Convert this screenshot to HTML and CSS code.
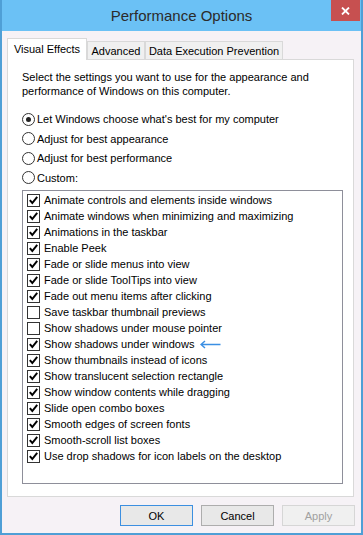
FILE: index.html
```html
<!DOCTYPE html>
<html lang="en">
<head>
    <meta charset="UTF-8">
    <meta name="viewport" content="width=device-width, initial-scale=1.0">
    <title>Performance Options</title>
    <link rel="stylesheet" href="styles.css">
</head>
<body>
    <div class="window">
        <div class="titlebar">
            <div class="title">Performance Options</div>
            <div class="close">
                <svg width="9" height="8" viewBox="0 0 9 8"><path d="M1 0.5 L8 7.5 M8 0.5 L1 7.5" stroke="#fff" stroke-width="1.8"/></svg>
            </div>
        </div>

        <div class="content">
            <div class="tabs">
                <div class="tab active tab-visual">Visual Effects</div>
                <div class="tab tab-advanced">Advanced</div>
                <div class="tab tab-dep">Data Execution Prevention</div>
            </div>

            <div class="panel">
                <p class="intro">Select the settings you want to use for the appearance and performance of Windows on this computer.</p>

                <div class="radios">
                    <div class="radio-row"><span class="radio on"></span>Let Windows choose what's best for my computer</div>
                    <div class="radio-row"><span class="radio"></span>Adjust for best appearance</div>
                    <div class="radio-row"><span class="radio"></span>Adjust for best performance</div>
                    <div class="radio-row"><span class="radio"></span>Custom:</div>
                </div>

                <div class="list">
                    <div class="item"><span class="check on"><svg viewBox="0 0 11 11"><path d="M1.8 5.2 L4.3 8 L9.2 1.8"/></svg></span>Animate controls and elements inside windows</div>
                    <div class="item"><span class="check on"><svg viewBox="0 0 11 11"><path d="M1.8 5.2 L4.3 8 L9.2 1.8"/></svg></span>Animate windows when minimizing and maximizing</div>
                    <div class="item"><span class="check on"><svg viewBox="0 0 11 11"><path d="M1.8 5.2 L4.3 8 L9.2 1.8"/></svg></span>Animations in the taskbar</div>
                    <div class="item"><span class="check on"><svg viewBox="0 0 11 11"><path d="M1.8 5.2 L4.3 8 L9.2 1.8"/></svg></span>Enable Peek</div>
                    <div class="item"><span class="check on"><svg viewBox="0 0 11 11"><path d="M1.8 5.2 L4.3 8 L9.2 1.8"/></svg></span>Fade or slide menus into view</div>
                    <div class="item"><span class="check on"><svg viewBox="0 0 11 11"><path d="M1.8 5.2 L4.3 8 L9.2 1.8"/></svg></span>Fade or slide ToolTips into view</div>
                    <div class="item"><span class="check on"><svg viewBox="0 0 11 11"><path d="M1.8 5.2 L4.3 8 L9.2 1.8"/></svg></span>Fade out menu items after clicking</div>
                    <div class="item"><span class="check"></span>Save taskbar thumbnail previews</div>
                    <div class="item"><span class="check"></span>Show shadows under mouse pointer</div>
                    <div class="item"><span class="check on"><svg viewBox="0 0 11 11"><path d="M1.8 5.2 L4.3 8 L9.2 1.8"/></svg></span>Show shadows under windows
                        <svg class="arrow" width="21" height="9" viewBox="0 0 21 9"><path d="M1 4.5 H20.5 M5 1 L1 4.5 L5 8"/></svg>
                    </div>
                    <div class="item"><span class="check on"><svg viewBox="0 0 11 11"><path d="M1.8 5.2 L4.3 8 L9.2 1.8"/></svg></span>Show thumbnails instead of icons</div>
                    <div class="item"><span class="check on"><svg viewBox="0 0 11 11"><path d="M1.8 5.2 L4.3 8 L9.2 1.8"/></svg></span>Show translucent selection rectangle</div>
                    <div class="item"><span class="check on"><svg viewBox="0 0 11 11"><path d="M1.8 5.2 L4.3 8 L9.2 1.8"/></svg></span>Show window contents while dragging</div>
                    <div class="item"><span class="check on"><svg viewBox="0 0 11 11"><path d="M1.8 5.2 L4.3 8 L9.2 1.8"/></svg></span>Slide open combo boxes</div>
                    <div class="item"><span class="check on"><svg viewBox="0 0 11 11"><path d="M1.8 5.2 L4.3 8 L9.2 1.8"/></svg></span>Smooth edges of screen fonts</div>
                    <div class="item"><span class="check on"><svg viewBox="0 0 11 11"><path d="M1.8 5.2 L4.3 8 L9.2 1.8"/></svg></span>Smooth-scroll list boxes</div>
                    <div class="item"><span class="check on"><svg viewBox="0 0 11 11"><path d="M1.8 5.2 L4.3 8 L9.2 1.8"/></svg></span>Use drop shadows for icon labels on the desktop</div>
                </div>
            </div>

            <div class="buttons">
                <button class="btn default">OK</button>
                <button class="btn">Cancel</button>
                <button class="btn disabled">Apply</button>
            </div>
        </div>
    </div>
</body>
</html>
```

FILE: styles.css
```css
* {
    margin: 0;
    padding: 0;
    box-sizing: border-box;
}

body {
    font-family: 'Liberation Sans', 'Noto Sans', sans-serif;
    font-size: 11px;
    color: #000;
    background: #fff;
}

.window {
    width: 363px;
    height: 535px;
    display: flex;
    flex-direction: column;
    background: #f6f2f6;
    border: 2px solid #4f9fd6;
    border-top: 0;
}

.titlebar {
    height: 31px;
    background: #6bc1f5;
    display: grid;
    grid-template-columns: 1fr auto 1fr;
}

.title {
    grid-column: 2;
    align-self: center;
    font-size: 15px;
    color: #2b2b2b;
}

.close {
    grid-column: 3;
    justify-self: end;
    width: 29px;
    min-width: 29px;
    height: 21px;
    margin-right: 1px;
    background: #c75050;
    display: flex;
    align-items: center;
    justify-content: center;
}

.content {
    flex: 1;
    display: flex;
    flex-direction: column;
    padding: 7px 7px 7px 5px;
}

/* tabs */
.tabs {
    height: 21px;
    display: flex;
    align-items: flex-end;
}

.tab {
    height: 18px;
    display: flex;
    align-items: center;
    justify-content: center;
    background: #f0f0f0;
    border: 1px solid #d9d9d9;
    border-bottom: 0;
    white-space: nowrap;
}

.tab.active {
    height: 22px;
    margin-bottom: -1px;
    background: #fff;
    position: relative;
    z-index: 1;
    padding-bottom: 1px;
}

.tab-visual { width: 80px; }
.tab-advanced { width: 58px; }
.tab-dep { width: 138px; }

.panel {
    flex: 1;
    display: flex;
    flex-direction: column;
    background: #fff;
    border: 1px solid #d9d9d9;
    padding: 10px 10px 12px 14px;
}

.intro {
    line-height: 14px;
    width: 320px;
}

.radios {
    margin-top: 11.5px;
}

.radio-row {
    height: 19.5px;
    display: flex;
    align-items: center;
    gap: 2px;
}

.radio {
    width: 13px;
    height: 13px;
    border: 1px solid #333;
    border-radius: 50%;
    background: #fff;
    display: flex;
    align-items: center;
    justify-content: center;
}

.radio.on::after {
    content: '';
    width: 5px;
    height: 5px;
    border-radius: 50%;
    background: #222;
}

/* list box */
.list {
    flex: 1;
    width: 321px;
    margin-top: 2.5px;
    border: 1px solid #8e8f9a;
    padding-top: 1px;
}

.item {
    height: 16px;
    display: flex;
    align-items: center;
    gap: 4px;
    padding-left: 4px;
    white-space: nowrap;
}

.check {
    width: 13px;
    height: 13px;
    border: 1px solid #333;
    background: #fff;
    flex-shrink: 0;
}

.check svg {
    display: block;
    width: 11px;
    height: 11px;
    fill: none;
    stroke: #000;
    stroke-width: 2;
}

.arrow {
    margin-left: 2px;
    fill: none;
    stroke: #3b8fe3;
    stroke-width: 1.5;
}

/* buttons */
.buttons {
    display: flex;
    justify-content: flex-end;
    gap: 8px;
    margin-top: 8px;
    margin-right: -1px;
}

.btn {
    width: 73px;
    height: 21px;
    font-family: inherit;
    font-size: 11px;
    color: #000;
    background: #e8e8e8;
    border: 1px solid #adadad;
}

.btn.default {
    border-color: #3c8fe0;
}

.btn.disabled {
    color: #a0a0a0;
    background: #f0f0f0;
    border-color: #d6d6d6;
}
```
